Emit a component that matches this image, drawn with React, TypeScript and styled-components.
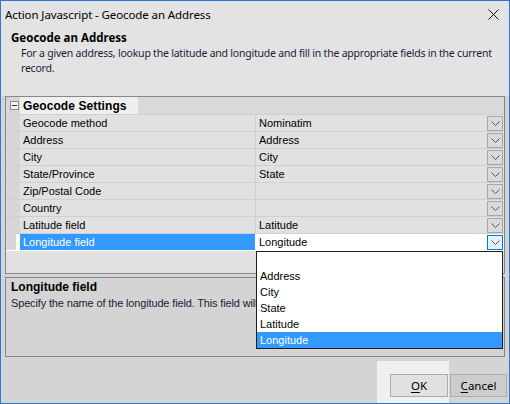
import React from 'react';
import styled, { createGlobalStyle } from 'styled-components';

const GlobalStyle = createGlobalStyle`
	html, body {
		margin: 0;
		padding: 0;
		background: #d4d4d4;
	}
	* {
		box-sizing: border-box;
	}
`;

type RowProps = {
	$selected?: boolean;
};

type ItemProps = {
	$active?: boolean;
};

const Window = styled.div`
	width: 510px;
	height: 404px;
	border: 1px solid #2b79d0;
	background: #d4d4d4;
	display: flex;
	flex-direction: column;
	font-family: 'Liberation Sans', Arial, sans-serif;
	color: #000;
	overflow: hidden;
`;

const TitleBar = styled.div`
	height: 26px;
	display: flex;
	align-items: center;
	justify-content: space-between;
	padding: 0 10px 0 4px;
	background: #e3e3e3;
	font-family: 'Noto Sans', 'Open Sans', sans-serif;
	font-size: 11.5px;
	letter-spacing: -0.1px;
`;

const Header = styled.div`
	height: 69px;
	background: #e3e3e3;
	padding: 3px 10px 0 10px;
	font-family: 'Noto Sans', 'Open Sans', sans-serif;
`;

const HeaderTitle = styled.div`
	font-size: 11.5px;
	font-weight: bold;
	line-height: 16px;
`;

const HeaderText = styled.div`
	font-size: 10.5px;
	letter-spacing: -0.22px;
	line-height: 15px;
	padding-left: 10px;
	color: #1c1c3a;
	white-space: nowrap;
`;

const Body = styled.div`
	flex: 1;
	display: flex;
	flex-direction: column;
	gap: 3px;
	padding: 0 4px;
`;

const Grid = styled.div`
	height: 178px;
	border: 1px solid #828790;
	background: #e1e1e1;
	display: flex;
	flex-direction: column;
	font-size: 11px;
`;

const Category = styled.div`
	height: 18px;
	display: flex;
	background: #d9d9d9;
	border-bottom: 1px solid #d0d0d0;
`;

const Margin = styled.div<RowProps>`
	width: 14px;
	flex: none;
	display: flex;
	align-items: center;
	justify-content: center;
	background: ${(p) =>
		p.$selected ? 'linear-gradient(to right, #d6d6d6 10px, #fff 10px)' : '#d6d6d6'};
`;

const Toggle = styled.div`
	width: 9px;
	height: 9px;
	border: 1px solid #8c8c8c;
	background: #f4f4f4;
	position: relative;
	margin-left: 2px;
	&::after {
		content: '';
		position: absolute;
		left: 1px;
		right: 1px;
		top: 3px;
		height: 1px;
		background: #333;
	}
`;

const CategoryLabel = styled.div`
	background: #efefef;
	padding: 0 3px;
	width: 118px;
	font-weight: bold;
	font-size: 12px;
	line-height: 18px;
	letter-spacing: 0.1px;
`;

const Row = styled.div<RowProps>`
	height: 17px;
	display: flex;
	background: ${(p) => (p.$selected ? '#fff' : '#e1e1e1')};
	border-bottom: 1px solid ${(p) => (p.$selected ? '#fff' : '#d0d0d0')};
	position: relative;
`;

const Label = styled.div<RowProps>`
	width: 236px;
	flex: none;
	padding-left: 3px;
	line-height: 16px;
	background: ${(p) => (p.$selected ? '#3399ff' : 'transparent')};
	color: ${(p) => (p.$selected ? '#fff' : '#000')};
	border-right: 1px solid ${(p) => (p.$selected ? '#fff' : '#d0d0d0')};
	white-space: nowrap;
`;

const Value = styled.div`
	flex: 1;
	display: flex;
	align-items: center;
	justify-content: space-between;
	padding: 0 1px 0 3px;
	line-height: 16px;
	position: relative;
`;

const DropButton = styled.div<RowProps>`
	width: 16px;
	height: 15px;
	display: flex;
	align-items: center;
	justify-content: center;
	border: 1px solid ${(p) => (p.$selected ? '#0078d7' : '#a8a8a8')};
	background: ${(p) => (p.$selected ? '#e5f1fb' : '#dadada')};
`;

const DropList = styled.div`
	position: absolute;
	left: 0;
	top: 17px;
	width: 247px;
	height: 98px;
	border: 1px solid #1e1e1e;
	background: #fff;
	z-index: 5;
	display: flex;
	flex-direction: column;
`;

const DropItem = styled.div<ItemProps>`
	height: 16px;
	line-height: 16px;
	padding-left: 3px;
	font-size: 11px;
	background: ${(p) => (p.$active ? '#3399ff' : '#fff')};
	color: ${(p) => (p.$active ? '#fff' : '#000')};
`;

const HelpBox = styled.div`
	height: 80px;
	border: 1px solid #828790;
	padding: 2px 5px;
	font-size: 11px;
`;

const HelpTitle = styled.div`
	font-weight: bold;
	font-size: 12px;
	line-height: 15px;
`;

const HelpText = styled.div`
	line-height: 16px;
	color: #1c1c3a;
	letter-spacing: -0.15px;
	white-space: nowrap;
`;

const Footer = styled.div`
	height: 42px;
	display: flex;
	justify-content: flex-end;
	align-items: stretch;
	padding-right: 5px;
	margin: 1px -4px 0;
	font-family: 'Noto Sans', 'Open Sans', sans-serif;
	font-size: 11.5px;
`;

const ButtonSlot = styled.div<ItemProps>`
	display: flex;
	align-items: flex-start;
	padding: 13px 1px 0 ${(p) => (p.$active ? '13px' : '1px')};
	background: ${(p) => (p.$active ? '#f0f0f0' : 'transparent')};
`;

const Button = styled.div<ItemProps>`
	width: ${(p) => (p.$active ? '58px' : '57px')};
	height: 23px;
	display: flex;
	align-items: center;
	justify-content: center;
	border: 1px solid #adadad;
	background: ${(p) => (p.$active ? '#e1e1e1' : '#cccccc')};
	u {
		text-decoration: underline;
		text-underline-offset: 2px;
	}
`;

const Chevron = () => (
	<svg width='9' height='5' viewBox='0 0 9 5'>
		<path d='M0.5 0.5 L4.5 4.5 L8.5 0.5' fill='none' stroke='#555' strokeWidth='1' />
	</svg>
);

const CloseIcon = () => (
	<svg width='11' height='11' viewBox='0 0 11 11'>
		<path d='M0.5 0.5 L10.5 10.5 M10.5 0.5 L0.5 10.5' stroke='#111' strokeWidth='1' />
	</svg>
);

const rows = [
	{ label: 'Geocode method', value: 'Nominatim' },
	{ label: 'Address', value: 'Address' },
	{ label: 'City', value: 'City' },
	{ label: 'State/Province', value: 'State' },
	{ label: 'Zip/Postal Code', value: '' },
	{ label: 'Country', value: '' },
	{ label: 'Latitude field', value: 'Latitude' },
	{ label: 'Longitude field', value: 'Longitude', selected: true },
];

const options = ['', 'Address', 'City', 'State', 'Latitude', 'Longitude'];

const App = () => {
	return (
		<>
			<GlobalStyle />
			<Window>
				<TitleBar>
					<span>Action Javascript - Geocode an Address</span>
					<CloseIcon />
				</TitleBar>
				<Header>
					<HeaderTitle>Geocode an Address</HeaderTitle>
					<HeaderText>
						For a given address, lookup the latitude and longitude and fill in the appropriate fields in the current
						<br />
						record.
					</HeaderText>
				</Header>
				<Body>
					<Grid>
						<Category>
							<Margin>
								<Toggle />
							</Margin>
							<CategoryLabel>Geocode Settings</CategoryLabel>
						</Category>
						{rows.map((r) => (
							<Row key={r.label} $selected={r.selected}>
								<Margin $selected={r.selected} />
								<Label $selected={r.selected}>{r.label}</Label>
								<Value>
									<span>{r.value}</span>
									<DropButton $selected={r.selected}>
										<Chevron />
									</DropButton>
									{r.selected && (
										<DropList>
											{options.map((o) => (
												<DropItem key={o || 'blank'} $active={o === 'Longitude'}>
													{o}
												</DropItem>
											))}
										</DropList>
									)}
								</Value>
							</Row>
						))}
					</Grid>
					<HelpBox>
						<HelpTitle>Longitude field</HelpTitle>
						<HelpText>Specify the name of the longitude field. This field will</HelpText>
					</HelpBox>
				</Body>
				<Footer>
					<ButtonSlot $active>
						<Button $active>
							<span>
								<u>O</u>K
							</span>
						</Button>
					</ButtonSlot>
					<ButtonSlot>
						<Button>
							<span>
								<u>C</u>ancel
							</span>
						</Button>
					</ButtonSlot>
				</Footer>
			</Window>
		</>
	);
};

export default App;
